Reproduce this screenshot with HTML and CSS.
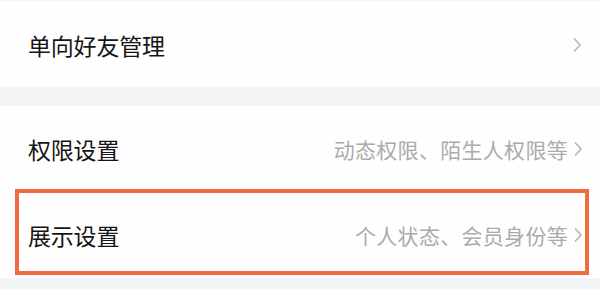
FILE: index.html
```html
<!DOCTYPE html>
<html lang="zh-CN">
<head>
    <meta charset="UTF-8">
    <title>设置</title>
    <link rel="stylesheet" href="styles.css">
</head>
<body>
    <div class="group first">
        <div class="row">
            <span class="title">单向好友管理</span>
            <span class="right">
                <svg class="chev" viewBox="0 0 10 16"><path d="M2 1.5 L8 8 L2 14.5"/></svg>
            </span>
        </div>
    </div>

    <div class="group">
        <div class="row">
            <span class="title">权限设置</span>
            <span class="right">
                <span class="desc">动态权限、陌生人权限等</span>
                <svg class="chev" viewBox="0 0 10 16"><path d="M2 1.5 L8 8 L2 14.5"/></svg>
            </span>
        </div>
        <div class="row marked">
            <span class="title">展示设置</span>
            <span class="right">
                <span class="desc">个人状态、会员身份等</span>
                <svg class="chev" viewBox="0 0 10 16"><path d="M2 1.5 L8 8 L2 14.5"/></svg>
            </span>
        </div>
    </div>
</body>
</html>
```

FILE: styles.css
```css
:root {
    --band: #f4f5f7;
    --white: #fefefe;
    --text: #151515;
    --muted: #ababab;
    --mark: #f26a3d;
}

body {
    margin: 0;
    background: var(--band);
    font-family: "Noto Sans CJK SC", "Noto Sans", sans-serif;
    overflow: hidden;
}

.group {
    background: var(--white);
    margin-bottom: 19px;
}

.group.first {
    padding-top: 2px;
    border-top: 1px solid #f3f4f4;
}

.row {
    position: relative;
    height: 86px;
    display: flex;
    align-items: center;
    justify-content: space-between;
    padding: 0 17px 0 28px;
}

.group.first .row {
    height: 84px;
}

.title {
    font-size: 23px;
    color: var(--text);
    letter-spacing: -0.2px;
}

.right {
    display: flex;
    align-items: center;
    gap: 5px;
}

.desc {
    font-size: 21px;
    color: var(--muted);
    letter-spacing: 0.3px;
}

.chev {
    width: 10px;
    height: 16px;
    fill: none;
    stroke: #b5b5b5;
    stroke-width: 1.6;
}

.group.first .chev {
    margin-right: 1px;
}

/* highlight frame drawn over the row */
.marked::after {
    content: "";
    position: absolute;
    left: 15px;
    right: 11px;
    top: -3px;
    bottom: 3px;
    border: 4px solid var(--mark);
}
```
